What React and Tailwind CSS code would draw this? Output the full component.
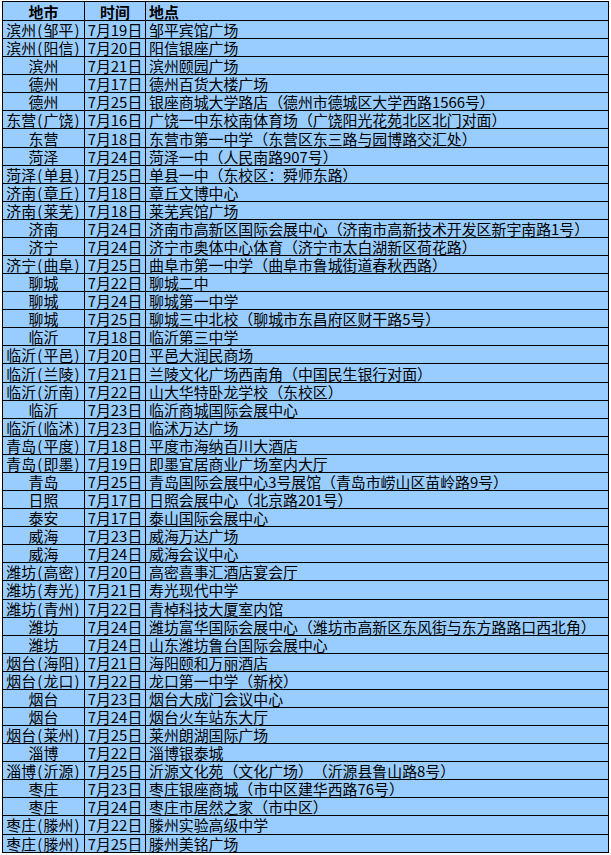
import React from 'react';

const filas = [
    ['滨州(邹平)', '7月19日', '邹平宾馆广场'],
    ['滨州(阳信)', '7月20日', '阳信银座广场'],
    ['滨州', '7月21日', '滨州颐园广场'],
    ['德州', '7月17日', '德州百货大楼广场'],
    ['德州', '7月25日', '银座商城大学路店（德州市德城区大学西路1566号）'],
    ['东营(广饶)', '7月16日', '广饶一中东校南体育场（广饶阳光花苑北区北门对面）'],
    ['东营', '7月18日', '东营市第一中学（东营区东三路与园博路交汇处）'],
    ['菏泽', '7月24日', '菏泽一中（人民南路907号）'],
    ['菏泽(单县)', '7月25日', '单县一中（东校区：舜师东路）'],
    ['济南(章丘)', '7月18日', '章丘文博中心'],
    ['济南(莱芜)', '7月18日', '莱芜宾馆广场'],
    ['济南', '7月24日', '济南市高新区国际会展中心（济南市高新技术开发区新宇南路1号）'],
    ['济宁', '7月24日', '济宁市奥体中心体育（济宁市太白湖新区荷花路）'],
    ['济宁(曲阜)', '7月25日', '曲阜市第一中学（曲阜市鲁城街道春秋西路）'],
    ['聊城', '7月22日', '聊城二中'],
    ['聊城', '7月24日', '聊城第一中学'],
    ['聊城', '7月25日', '聊城三中北校（聊城市东昌府区财干路5号）'],
    ['临沂', '7月18日', '临沂第三中学'],
    ['临沂(平邑)', '7月20日', '平邑大润民商场'],
    ['临沂(兰陵)', '7月21日', '兰陵文化广场西南角（中国民生银行对面）'],
    ['临沂(沂南)', '7月22日', '山大华特卧龙学校（东校区）'],
    ['临沂', '7月23日', '临沂商城国际会展中心'],
    ['临沂(临沭)', '7月23日', '临沭万达广场'],
    ['青岛(平度)', '7月18日', '平度市海纳百川大酒店'],
    ['青岛(即墨)', '7月19日', '即墨宜居商业广场室内大厅'],
    ['青岛', '7月25日', '青岛国际会展中心3号展馆（青岛市崂山区苗岭路9号）'],
    ['日照', '7月17日', '日照会展中心（北京路201号）'],
    ['泰安', '7月17日', '泰山国际会展中心'],
    ['威海', '7月23日', '威海万达广场'],
    ['威海', '7月24日', '威海会议中心'],
    ['潍坊(高密)', '7月20日', '高密喜事汇酒店宴会厅'],
    ['潍坊(寿光)', '7月21日', '寿光现代中学'],
    ['潍坊(青州)', '7月22日', '青棹科技大厦室内馆'],
    ['潍坊', '7月24日', '潍坊富华国际会展中心（潍坊市高新区东风街与东方路路口西北角）'],
    ['潍坊', '7月24日', '山东潍坊鲁台国际会展中心'],
    ['烟台(海阳)', '7月21日', '海阳颐和万丽酒店'],
    ['烟台(龙口)', '7月22日', '龙口第一中学（新校）'],
    ['烟台', '7月23日', '烟台大成门会议中心'],
    ['烟台', '7月24日', '烟台火车站东大厅'],
    ['烟台(莱州)', '7月25日', '莱州朗湖国际广场'],
    ['淄博', '7月22日', '淄博银泰城'],
    ['淄博(沂源)', '7月25日', '沂源文化苑（文化广场）（沂源县鲁山路8号）'],
    ['枣庄', '7月23日', '枣庄银座商城（市中区建华西路76号）'],
    ['枣庄', '7月24日', '枣庄市居然之家（市中区）'],
    ['枣庄(滕州)', '7月22日', '滕州实验高级中学'],
    ['枣庄(滕州)', '7月25日', '滕州美铭广场'],
];

const celda = 'border border-black p-0 whitespace-nowrap overflow-hidden';

// los parentesis del original son de medio ancho fijo (fuente de mapa de bits)
const Ciudad = ({ texto }) => {
    const partes = texto.split(/([()])/);
    return partes.map((p, i) =>
        p === '(' || p === ')'
            ? <span key={i} className='inline-block w-[0.5em] text-center'>{p}</span>
            : <span key={i}>{p}</span>
    );
};

const App = () => {
    return (
        <div className='pl-[2px] pt-[1px] bg-white min-h-screen [text-spacing-trim:space-all]' style={{ fontFamily: '"Noto Sans CJK SC", "Liberation Sans", sans-serif' }}>
            <table className='table-fixed border-collapse bg-[#99ccff] text-black text-[14.9px] leading-[17px] w-[607px]'>
                <colgroup>
                    <col className='w-[82px]' />
                    <col className='w-[61px]' />
                    <col />
                </colgroup>
                <thead>
                    <tr className='h-[19px]'>
                        <th className={celda + ' text-center font-bold'}>地市</th>
                        <th className={celda + ' text-center font-bold'}>时间</th>
                        <th className={celda + ' text-left font-bold pl-[3px]'}>地点</th>
                    </tr>
                </thead>
                <tbody>
                    {filas.map((fila, index) => (
                        <tr key={index} className='h-[18.09px]'>
                            <td className={celda + ' text-center'}><Ciudad texto={fila[0]} /></td>
                            <td className={celda + ' text-center'}>{fila[1]}</td>
                            <td className={celda + ' text-left pl-[3px]'}>{fila[2]}</td>
                        </tr>
                    ))}
                </tbody>
            </table>
        </div>
    );
};

export default App;
